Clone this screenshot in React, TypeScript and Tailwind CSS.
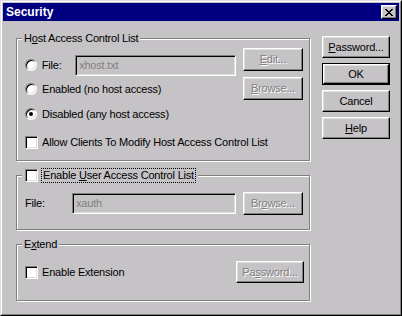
const FONT = "font-['Liberation_Sans',Arial,sans-serif] text-[11px] tracking-[-0.2px] leading-[13px]";
const RAISED =
  "border border-t-white border-l-white border-r-black border-b-black shadow-[inset_-1px_-1px_0_#808080,inset_1px_1px_0_#dfdfdf] bg-[#c6c3c6]";
const SUNKEN =
  "border border-t-[#808080] border-l-[#808080] border-b-white border-r-white shadow-[inset_1px_1px_0_#000,inset_-1px_-1px_0_#dfdfdf]";
const DIM = "text-[#808080] [text-shadow:1px_1px_0_#fff]";

function Btn({
  children,
  disabled,
  isDefault,
  className = "",
}: {
  children: React.ReactNode;
  disabled?: boolean;
  isDefault?: boolean;
  className?: string;
}) {
  const face = (
    <div className={`${RAISED} flex flex-1 items-center justify-center ${disabled ? DIM : "text-black"}`}>
      <span>{children}</span>
    </div>
  );
  if (isDefault) {
    return <div className={`flex border border-black ${className}`}>{face}</div>;
  }
  return <div className={`flex ${className}`}>{face}</div>;
}

function Field({ value }: { value: string }) {
  return (
    <div className={`${SUNKEN} flex items-center w-[164px] h-[21px] pl-[3px] text-[#808080]`}>
      {value}
    </div>
  );
}

function Radio({ checked }: { checked?: boolean }) {
  return (
    <span className="flex w-[13px] justify-start">
      <span
        className={`flex w-[12px] h-[12px] items-center justify-center rounded-full bg-white ${SUNKEN}`}
      >
        {checked && <span className="w-[4px] h-[4px] rounded-full bg-black" />}
      </span>
    </span>
  );
}

function Check() {
  return <span className={`block w-[13px] h-[13px] bg-white ${SUNKEN}`} />;
}

function Group({
  legend,
  className = "",
  children,
}: {
  legend: React.ReactNode;
  className?: string;
  children: React.ReactNode;
}) {
  return (
    <div
      className={`relative border border-[#808080] shadow-[inset_1px_1px_0_#fff,1px_1px_0_#fff] ${className}`}
    >
      <div className="absolute left-[5px] top-[-8px] flex h-[15px] items-center bg-[#c6c3c6] px-[2px]">
        {legend}
      </div>
      {children}
    </div>
  );
}

function CloseGlyph() {
  return (
    <svg width="8" height="7" viewBox="0 0 8 7" shapeRendering="crispEdges">
      <path
        fill="#000"
        d="M0 0h2v1H0z M6 0h2v1H6z M1 1h2v1H1z M5 1h2v1H5z M2 2h4v1H2z M3 3h2v1H3z M2 4h4v1H2z M1 5h2v1H1z M5 5h2v1H5z M0 6h2v1H0z M6 6h2v1H6z"
      />
    </svg>
  );
}

export default function App() {
  return (
    <div
      className={`flex w-[402px] h-[316px] border border-t-[#dfdfdf] border-l-[#dfdfdf] border-r-black border-b-black bg-[#c6c3c6] ${FONT}`}
    >
      <div className="flex flex-1 flex-col border border-t-white border-l-white border-r-[#808080] border-b-[#808080] p-[1px]">
        <div className="flex h-[18px] items-center justify-between bg-[#000080] pl-[3px] pr-[2px]">
          <span className="text-[12px] font-bold tracking-normal text-white">Security</span>
          <div className={`${RAISED} flex w-[16px] h-[14px] items-center justify-center`}>
            <CloseGlyph />
          </div>
        </div>

        <div className="flex flex-1 pl-[13px] pr-[9px]">
          <div className="flex w-[294px] flex-col gap-[14px] pt-[17px]">
            <Group
              className="h-[123px]"
              legend={
                <span>
                  H<u>o</u>st Access Control List
                </span>
              }
            >
              <div className="flex">
                <div className="flex w-[219px] flex-col pl-[8px] pt-[14px]">
                  <div className="flex h-[24px] items-center gap-[4px]">
                    <Radio />
                    <span className="w-[30px]">File:</span>
                    <Field value="xhost.txt" />
                  </div>
                  <div className="flex h-[24px] items-center gap-[4px]">
                    <Radio />
                    <span>Enabled (no host access)</span>
                  </div>
                  <div className="flex h-[26px] items-center gap-[4px]">
                    <Radio checked />
                    <span>Disabled (any host access)</span>
                  </div>
                </div>
                <div className="ml-[7px] flex flex-col gap-[6px] pt-[9px]">
                  <Btn disabled className="w-[60px] h-[23px]">
                    <u>E</u>dit...
                  </Btn>
                  <Btn disabled className="w-[60px] h-[23px]">
                    <u>B</u>rowse...
                  </Btn>
                </div>
              </div>
              <div className="mt-[3px] flex h-[24px] items-center gap-[4px] pl-[8px]">
                <Check />
                <span>Allow Clients To Modify Host Access Control List</span>
              </div>
            </Group>

            <Group
              className="h-[55px]"
              legend={
                <div className="flex items-center gap-[3px] pl-[1px]">
                  <Check />
                  <span className="border border-dotted border-black px-[1px]">
                    Enable <u>U</u>ser Access Control List
                  </span>
                </div>
              }
            >
              <div className="flex items-center pl-[8px] pt-[16px]">
                <span className="w-[47px]">File:</span>
                <Field value="xauth" />
                <Btn disabled className="ml-[7px] w-[60px] h-[23px]">
                  Br<u>o</u>wse...
                </Btn>
              </div>
            </Group>

            <Group
              className="h-[57px]"
              legend={
                <span>
                  E<u>x</u>tend
                </span>
              }
            >
              <div className="flex items-center justify-between pl-[8px] pr-[5px] pt-[16px]">
                <div className="flex items-center gap-[4px]">
                  <Check />
                  <span>Enable Extension</span>
                </div>
                <Btn disabled className="w-[68px] h-[22px]">
                  Pa<u>s</u>sword...
                </Btn>
              </div>
            </Group>
          </div>

          <div className="ml-[12px] flex w-[68px] flex-col gap-[5px] pt-[15px]">
            <Btn className="h-[22px]">
              <u>P</u>assword...
            </Btn>
            <Btn isDefault className="h-[22px]">
              OK
            </Btn>
            <Btn className="h-[22px]">Cancel</Btn>
            <Btn className="h-[22px]">
              <u>H</u>elp
            </Btn>
          </div>
        </div>
      </div>
    </div>
  );
}
